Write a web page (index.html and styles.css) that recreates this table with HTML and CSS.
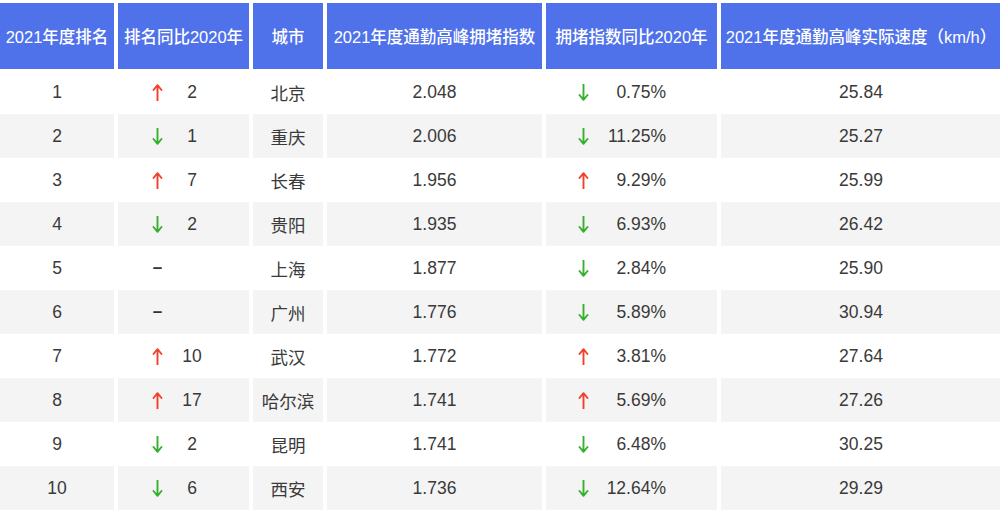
FILE: index.html
```html
<!DOCTYPE html>
<html lang="zh-CN">
<head>
<meta charset="utf-8">
<title>2021年度通勤高峰拥堵指数排名</title>
<link rel="stylesheet" href="styles.css">
</head>
<body>
<div class="table">
  <div class="row head">
    <div class="cell">2021年度排名</div>
    <div class="cell">排名同比2020年</div>
    <div class="cell">城市</div>
    <div class="cell">2021年度通勤高峰拥堵指数</div>
    <div class="cell">拥堵指数同比2020年</div>
    <div class="cell">2021年度通勤高峰实际速度（km/h）</div>
  </div>

  <div class="row">
    <div class="cell">1</div>
    <div class="cell chg"><span class="ar up"><svg viewBox="0 0 11 17"><path d="M5.5 16.5V1.5M1.5 6L5.5 1.2L9.5 6"/></svg></span><span class="rk">2</span></div>
    <div class="cell">北京</div>
    <div class="cell">2.048</div>
    <div class="cell pct"><span class="ar down"><svg viewBox="0 0 11 17"><path d="M5.5 0.5V15.5M1.5 11L5.5 15.8L9.5 11"/></svg></span><span class="pv">0.75%</span></div>
    <div class="cell">25.84</div>
  </div>

  <div class="row alt">
    <div class="cell">2</div>
    <div class="cell chg"><span class="ar down"><svg viewBox="0 0 11 17"><path d="M5.5 0.5V15.5M1.5 11L5.5 15.8L9.5 11"/></svg></span><span class="rk">1</span></div>
    <div class="cell">重庆</div>
    <div class="cell">2.006</div>
    <div class="cell pct"><span class="ar down"><svg viewBox="0 0 11 17"><path d="M5.5 0.5V15.5M1.5 11L5.5 15.8L9.5 11"/></svg></span><span class="pv">11.25%</span></div>
    <div class="cell">25.27</div>
  </div>

  <div class="row">
    <div class="cell">3</div>
    <div class="cell chg"><span class="ar up"><svg viewBox="0 0 11 17"><path d="M5.5 16.5V1.5M1.5 6L5.5 1.2L9.5 6"/></svg></span><span class="rk">7</span></div>
    <div class="cell">长春</div>
    <div class="cell">1.956</div>
    <div class="cell pct"><span class="ar up"><svg viewBox="0 0 11 17"><path d="M5.5 16.5V1.5M1.5 6L5.5 1.2L9.5 6"/></svg></span><span class="pv">9.29%</span></div>
    <div class="cell">25.99</div>
  </div>

  <div class="row alt">
    <div class="cell">4</div>
    <div class="cell chg"><span class="ar down"><svg viewBox="0 0 11 17"><path d="M5.5 0.5V15.5M1.5 11L5.5 15.8L9.5 11"/></svg></span><span class="rk">2</span></div>
    <div class="cell">贵阳</div>
    <div class="cell">1.935</div>
    <div class="cell pct"><span class="ar down"><svg viewBox="0 0 11 17"><path d="M5.5 0.5V15.5M1.5 11L5.5 15.8L9.5 11"/></svg></span><span class="pv">6.93%</span></div>
    <div class="cell">26.42</div>
  </div>

  <div class="row">
    <div class="cell">5</div>
    <div class="cell chg"><span class="ar dash">–</span><span class="rk"></span></div>
    <div class="cell">上海</div>
    <div class="cell">1.877</div>
    <div class="cell pct"><span class="ar down"><svg viewBox="0 0 11 17"><path d="M5.5 0.5V15.5M1.5 11L5.5 15.8L9.5 11"/></svg></span><span class="pv">2.84%</span></div>
    <div class="cell">25.90</div>
  </div>

  <div class="row alt">
    <div class="cell">6</div>
    <div class="cell chg"><span class="ar dash">–</span><span class="rk"></span></div>
    <div class="cell">广州</div>
    <div class="cell">1.776</div>
    <div class="cell pct"><span class="ar down"><svg viewBox="0 0 11 17"><path d="M5.5 0.5V15.5M1.5 11L5.5 15.8L9.5 11"/></svg></span><span class="pv">5.89%</span></div>
    <div class="cell">30.94</div>
  </div>

  <div class="row">
    <div class="cell">7</div>
    <div class="cell chg"><span class="ar up"><svg viewBox="0 0 11 17"><path d="M5.5 16.5V1.5M1.5 6L5.5 1.2L9.5 6"/></svg></span><span class="rk">10</span></div>
    <div class="cell">武汉</div>
    <div class="cell">1.772</div>
    <div class="cell pct"><span class="ar up"><svg viewBox="0 0 11 17"><path d="M5.5 16.5V1.5M1.5 6L5.5 1.2L9.5 6"/></svg></span><span class="pv">3.81%</span></div>
    <div class="cell">27.64</div>
  </div>

  <div class="row alt">
    <div class="cell">8</div>
    <div class="cell chg"><span class="ar up"><svg viewBox="0 0 11 17"><path d="M5.5 16.5V1.5M1.5 6L5.5 1.2L9.5 6"/></svg></span><span class="rk">17</span></div>
    <div class="cell">哈尔滨</div>
    <div class="cell">1.741</div>
    <div class="cell pct"><span class="ar up"><svg viewBox="0 0 11 17"><path d="M5.5 16.5V1.5M1.5 6L5.5 1.2L9.5 6"/></svg></span><span class="pv">5.69%</span></div>
    <div class="cell">27.26</div>
  </div>

  <div class="row">
    <div class="cell">9</div>
    <div class="cell chg"><span class="ar down"><svg viewBox="0 0 11 17"><path d="M5.5 0.5V15.5M1.5 11L5.5 15.8L9.5 11"/></svg></span><span class="rk">2</span></div>
    <div class="cell">昆明</div>
    <div class="cell">1.741</div>
    <div class="cell pct"><span class="ar down"><svg viewBox="0 0 11 17"><path d="M5.5 0.5V15.5M1.5 11L5.5 15.8L9.5 11"/></svg></span><span class="pv">6.48%</span></div>
    <div class="cell">30.25</div>
  </div>

  <div class="row alt">
    <div class="cell">10</div>
    <div class="cell chg"><span class="ar down"><svg viewBox="0 0 11 17"><path d="M5.5 0.5V15.5M1.5 11L5.5 15.8L9.5 11"/></svg></span><span class="rk">6</span></div>
    <div class="cell">西安</div>
    <div class="cell">1.736</div>
    <div class="cell pct"><span class="ar down"><svg viewBox="0 0 11 17"><path d="M5.5 0.5V15.5M1.5 11L5.5 15.8L9.5 11"/></svg></span><span class="pv">12.64%</span></div>
    <div class="cell">29.29</div>
  </div>
</div>
</body>
</html>
```

FILE: styles.css
```css
html, body {
  margin: 0;
  padding: 0;
  background: #ffffff;
  overflow: hidden;
}

body {
  font-family: "Liberation Sans", "Noto Sans CJK SC", sans-serif;
  color: #3a3a3a;
}

.table {
  width: 1000px;
  padding-top: 3px;
}

.row {
  display: grid;
  grid-template-columns: 114px 131px 70px 215px 171px 280px;
  column-gap: 4px;
  height: 44px;
}

.cell {
  display: flex;
  align-items: center;
  justify-content: center;
  font-size: 17.5px;
  white-space: nowrap;
}

.head {
  height: 66px;
  margin-bottom: 1px;
}

.head .cell {
  background: #4f72ea;
  color: #ffffff;
  font-size: 16.5px;
  font-weight: 500;
}

.alt .cell {
  background: #f4f4f4;
}

.chg {
  justify-content: flex-start;
  padding-left: 34px;
}

.chg .rk {
  width: 32px;
  margin-left: 13px;
  text-align: center;
}

.pct {
  justify-content: flex-start;
  padding-left: 32px;
}

.pct .pv {
  width: 77px;
  text-align: right;
}

.ar {
  width: 11px;
  height: 17px;
  display: flex;
  align-items: center;
  justify-content: center;
}

.ar svg {
  width: 11px;
  height: 17px;
  fill: none;
  stroke-width: 1.9;
  stroke-linecap: round;
  stroke-linejoin: round;
}

.up svg {
  stroke: #f2402c;
}

.down svg {
  stroke: #36b02e;
}

.dash {
  font-weight: 700;
  color: #333333;
  font-size: 17px;
}
```
